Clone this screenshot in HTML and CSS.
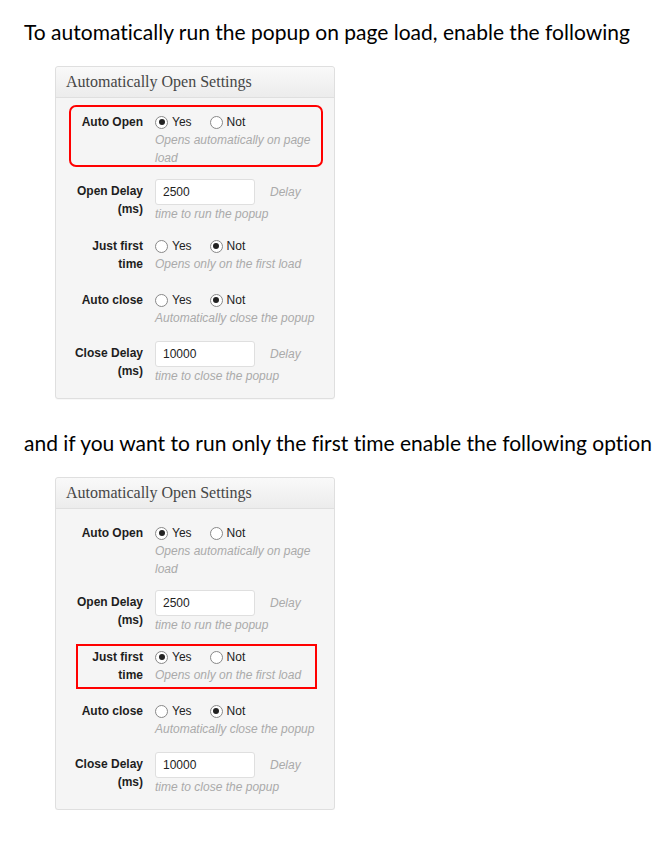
FILE: index.html
```html
<!DOCTYPE html>
<html>
<head>
<meta charset="utf-8">
<link rel="stylesheet" href="styles.css">
</head>
<body>
<p class="intro intro-first">To automatically run the popup on page load, enable the following</p>
<section class="panel">
  <h3 class="panel-title">Automatically Open Settings</h3>
  <div class="panel-body">
    <div class="row row-first mark-round">
      <div class="label">Auto Open</div>
      <div class="field">
        <div class="radios">
          <label class="opt"><input type="radio" name="ao1" checked><span>Yes</span></label>
          <label class="opt"><input type="radio" name="ao1"><span>Not</span></label>
        </div>
        <div class="desc">Opens automatically on page load</div>
      </div>
    </div>
    <div class="row row-input">
      <div class="label">Open Delay (ms)</div>
      <div class="field">
        <div class="inline"><input class="text" type="text" value="2500"><span class="unit">Delay</span></div>
        <div class="desc">time to run the popup</div>
      </div>
    </div>
    <div class="row row-wrap">
      <div class="label">Just first time</div>
      <div class="field">
        <div class="radios">
          <label class="opt"><input type="radio" name="jf1"><span>Yes</span></label>
          <label class="opt"><input type="radio" name="jf1" checked><span>Not</span></label>
        </div>
        <div class="desc">Opens only on the first load</div>
      </div>
    </div>
    <div class="row">
      <div class="label">Auto close</div>
      <div class="field">
        <div class="radios">
          <label class="opt"><input type="radio" name="ac1"><span>Yes</span></label>
          <label class="opt"><input type="radio" name="ac1" checked><span>Not</span></label>
        </div>
        <div class="desc">Automatically close the popup</div>
      </div>
    </div>
    <div class="row row-input">
      <div class="label">Close Delay (ms)</div>
      <div class="field">
        <div class="inline"><input class="text" type="text" value="10000"><span class="unit">Delay</span></div>
        <div class="desc">time to close the popup</div>
      </div>
    </div>
  </div>
</section>

<p class="intro intro-second">and if you want to run only the first time enable the following option</p>
<section class="panel">
  <h3 class="panel-title">Automatically Open Settings</h3>
  <div class="panel-body">
    <div class="row row-first">
      <div class="label">Auto Open</div>
      <div class="field">
        <div class="radios">
          <label class="opt"><input type="radio" name="ao2" checked><span>Yes</span></label>
          <label class="opt"><input type="radio" name="ao2"><span>Not</span></label>
        </div>
        <div class="desc">Opens automatically on page load</div>
      </div>
    </div>
    <div class="row row-input">
      <div class="label">Open Delay (ms)</div>
      <div class="field">
        <div class="inline"><input class="text" type="text" value="2500"><span class="unit">Delay</span></div>
        <div class="desc">time to run the popup</div>
      </div>
    </div>
    <div class="row row-wrap mark-square">
      <div class="label">Just first time</div>
      <div class="field">
        <div class="radios">
          <label class="opt"><input type="radio" name="jf2" checked><span>Yes</span></label>
          <label class="opt"><input type="radio" name="jf2"><span>Not</span></label>
        </div>
        <div class="desc">Opens only on the first load</div>
      </div>
    </div>
    <div class="row">
      <div class="label">Auto close</div>
      <div class="field">
        <div class="radios">
          <label class="opt"><input type="radio" name="ac2"><span>Yes</span></label>
          <label class="opt"><input type="radio" name="ac2" checked><span>Not</span></label>
        </div>
        <div class="desc">Automatically close the popup</div>
      </div>
    </div>
    <div class="row row-input">
      <div class="label">Close Delay (ms)</div>
      <div class="field">
        <div class="inline"><input class="text" type="text" value="10000"><span class="unit">Delay</span></div>
        <div class="desc">time to close the popup</div>
      </div>
    </div>
  </div>
</section>
</body>
</html>
```

FILE: styles.css
```css
html, body {
  margin: 0;
  padding: 0;
  background: #ffffff;
}

body {
  font-family: "Liberation Sans", Arial, sans-serif;
  color: #222;
}

.intro {
  margin: 0;
  padding-left: 24px;
  font-family: Lato, "Open Sans", sans-serif;
  font-size: 21px;
  line-height: 28px;
  color: #000;
  white-space: nowrap;
  font-variant-ligatures: none;
  font-feature-settings: "liga" 0, "clig" 0, "dlig" 0;
}

.intro-first {
  padding-top: 18px;
  margin-bottom: 20px;
}

.intro-second {
  margin-top: 30px;
  margin-bottom: 20px;
}

.panel {
  margin-left: 55px;
  width: 278px;
  border: 1px solid #dfdfdf;
  border-radius: 3px;
  background: #f5f5f5;
  box-shadow: 0 1px 1px rgba(0,0,0,0.03);
}

.panel-title {
  margin: 0;
  height: 30px;
  padding: 0 10px;
  font-family: "Liberation Serif", Georgia, serif;
  font-weight: normal;
  font-size: 16px;
  line-height: 30px;
  color: #464646;
  background: linear-gradient(to bottom, #f9f9f9, #ececec);
  border-bottom: 1px solid #dfdfdf;
  border-radius: 3px 3px 0 0;
}

.panel-body {
  padding: 15px 10px 10px 17px;
  display: flex;
  flex-direction: column;
  gap: 11px;
}

.row {
  position: relative;
  display: grid;
  grid-template-columns: 70px 1fr;
  column-gap: 12px;
  font-size: 12px;
  line-height: 18px;
  padding-bottom: 3px;
}

.row-first {
  padding-bottom: 1px;
}

.row-wrap {
  margin-bottom: 4px;
}

.label {
  text-align: right;
  font-weight: bold;
  color: #1e1e1e;
}

.row-input .label {
  padding-top: 3px;
}

.field {
  display: flex;
  flex-direction: column;
}

.radios {
  display: flex;
  gap: 18px;
  height: 18px;
  align-items: center;
}

.opt {
  display: flex;
  align-items: center;
  gap: 4px;
  color: #222;
}

.opt input {
  appearance: none;
  -webkit-appearance: none;
  margin: 0;
  width: 13px;
  height: 13px;
  border: 1px solid #888;
  border-radius: 50%;
  background: #fff;
  box-sizing: border-box;
  position: relative;
}

.opt input:checked::after {
  content: "";
  position: absolute;
  left: 2.5px;
  top: 2.5px;
  width: 6px;
  height: 6px;
  border-radius: 50%;
  background: #222;
}

.desc {
  font-style: italic;
  color: #aaa;
}

.inline {
  display: flex;
  align-items: center;
  gap: 15px;
  height: 26px;
}

.text {
  box-sizing: border-box;
  width: 100px;
  height: 26px;
  margin: 0;
  padding: 0 7px;
  border: 1px solid #dfdfdf;
  border-radius: 3px;
  background: #fff;
  font-family: "Liberation Sans", Arial, sans-serif;
  font-size: 12px;
  color: #222;
}

.unit {
  font-style: italic;
  color: #aaa;
}

.mark-round::before,
.mark-square::before {
  content: "";
  position: absolute;
  border: 2px solid #f00;
  pointer-events: none;
}

.mark-round::before {
  left: -4px;
  right: 1px;
  top: -8px;
  bottom: 1px;
  border-radius: 7px;
}

.mark-square::before {
  left: 3px;
  right: 7px;
  top: -4px;
  bottom: -2px;
}
```
